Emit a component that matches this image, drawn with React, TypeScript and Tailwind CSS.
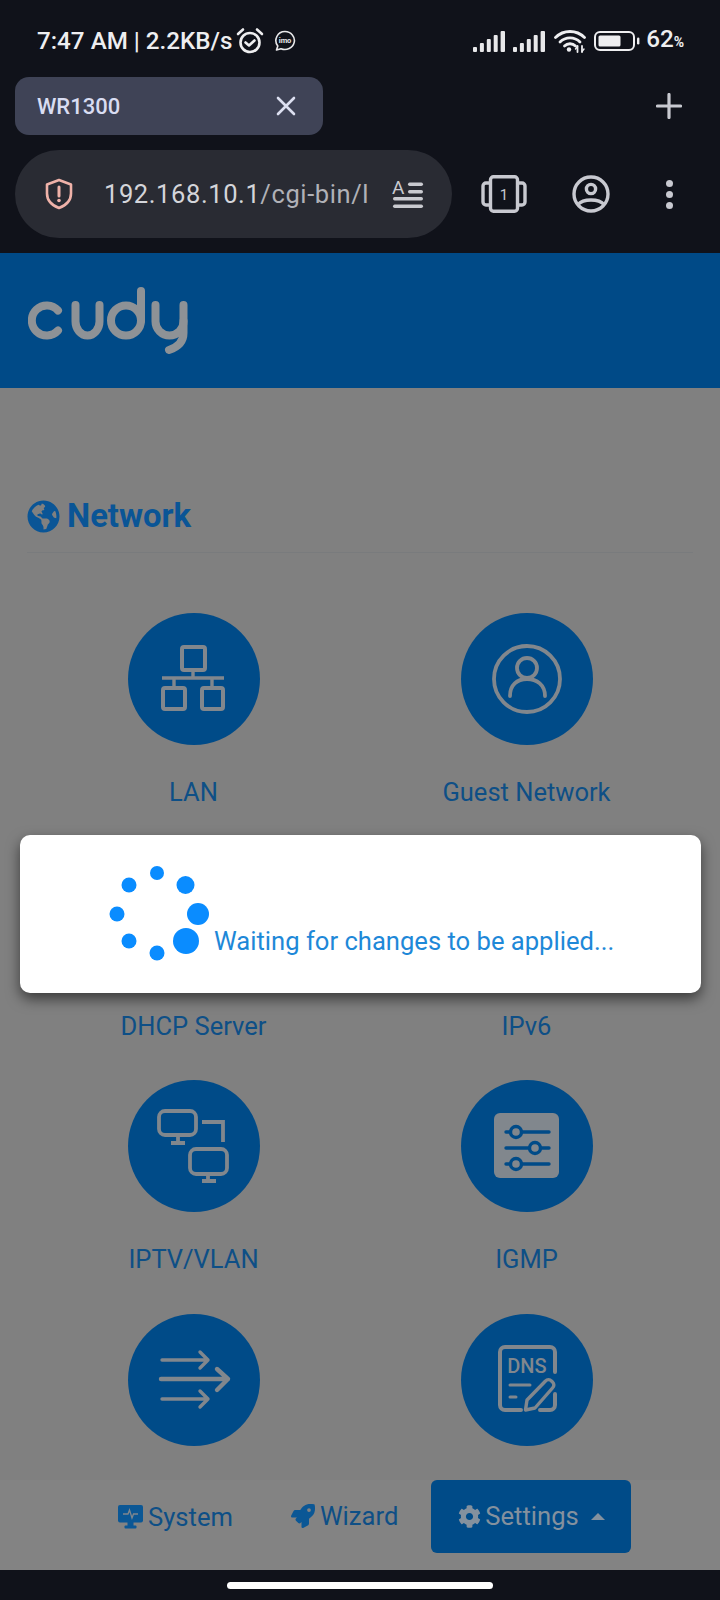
import React from "react";
import { FaGlobeAmericas, FaRocket, FaCog } from "react-icons/fa";

const G = "#81878d";

function Signal() {
  const bars = [5, 9, 13, 17, 21];
  return (
    <svg width="33" height="22" viewBox="0 0 33 22" fill="#e8e8ea">
      {bars.map((h, i) => (
        <rect key={i} x={i * 6.9} y={22 - h} width={i === 4 ? 4.4 : 4} height={h} rx="1" />
      ))}
    </svg>
  );
}

function Alarm() {
  return (
    <svg width="28" height="28" viewBox="0 0 28 28" fill="none" stroke="#eeeef0" strokeWidth="2.6" strokeLinecap="round" strokeLinejoin="round">
      <circle cx="14" cy="15.5" r="9.5" />
      <path d="M9.5 15.5l3.5 3 5.5-5" />
      <path d="M2 7 L7 2.5" />
      <path d="M26 7 L21 2.5" />
    </svg>
  );
}

function Imo() {
  return (
    <svg width="22" height="22" viewBox="0 0 22 22" fill="none" stroke="#e8e8ea">
      <path d="M11 1.5a9.5 9 0 1 1-4 17.2L2.5 20l1.3-4A9 9 0 0 1 11 1.5z" strokeWidth="1.6" strokeLinejoin="round" />
      <text x="11" y="13" fontSize="7.5" textAnchor="middle" fill="#e8e8ea" stroke="none" fontFamily="Roboto, sans-serif" fontWeight="700">imo</text>
    </svg>
  );
}

function Wifi() {
  return (
    <svg width="32" height="24" viewBox="0 0 32 24" fill="none" stroke="#eeeef0" strokeWidth="2.8" strokeLinecap="round">
      <path d="M1.5 8.5C9.5 .5 22.5 .5 30.5 8.5" />
      <path d="M6 13C11.5 7.5 20.5 7.5 26 13" />
      <path d="M10.5 17C13.5 14 18.5 14 21.5 17" />
      <circle cx="15" cy="20.5" r="2.2" fill="#eeeef0" stroke="none" />
      <path d="M23.5 17v6M28 17v6" strokeWidth="1.8" />
      <path d="M21.5 20l2-2.5M30 20l-2 2.5" strokeWidth="1.4" />
    </svg>
  );
}

function Battery() {
  return (
    <svg width="46" height="20" viewBox="0 0 46 20">
      <rect x="1" y="1" width="39" height="18" rx="5" fill="none" stroke="#eeeef0" strokeWidth="2" />
      <rect x="4.5" y="4.5" width="22" height="11" rx="1.5" fill="#eeeef0" />
      <rect x="43" y="6.5" width="2.4" height="7" rx="1.2" fill="#eeeef0" />
    </svg>
  );
}

function Shield() {
  return (
    <svg width="28" height="32" viewBox="0 0 28 32" fill="none" stroke="#efb2a9" strokeWidth="2.6" strokeLinejoin="round">
      <path d="M14 2 L26 6.5 V15.5 C26 23 20.5 27.5 14 30 C7.5 27.5 2 23 2 15.5 V6.5 Z" />
      <path d="M14 9v9" strokeLinecap="round" strokeWidth="3" />
      <circle cx="14" cy="22.5" r="1.8" fill="#efb2a9" stroke="none" />
    </svg>
  );
}

function Reader() {
  return (
    <svg width="32" height="30" viewBox="0 0 32 30" fill="#c9cad0" className="overflow-visible">
      <text x="0" y="14.5" fontSize="19" fontFamily="Roboto, sans-serif" fontWeight="400">A</text>
      <rect x="16" y="3.5" width="15" height="3.4" rx="1.7" />
      <rect x="16" y="11" width="15" height="3.4" rx="1.7" />
      <rect x="1" y="18" width="30" height="3.4" rx="1.7" />
      <rect x="1" y="25.5" width="30" height="3.4" rx="1.7" />
    </svg>
  );
}

function TabsIcon() {
  return (
    <svg width="46" height="38" viewBox="0 0 46 38" fill="none" stroke="#c8c9d0" strokeWidth="3.4" strokeLinejoin="round">
      <rect x="9.5" y="1.7" width="27" height="34.6" rx="3" />
      <path d="M9.5 8H5a3 3 0 0 0-3 3v16a3 3 0 0 0 3 3h4.5" />
      <path d="M36.5 8H41a3 3 0 0 1 3 3v16a3 3 0 0 1-3 3h-4.5" />
      <text x="23" y="25" fontSize="15" textAnchor="middle" fill="#c8c9d0" stroke="none" fontFamily="Roboto, sans-serif">1</text>
    </svg>
  );
}

function Profile() {
  return (
    <svg width="38" height="38" viewBox="0 0 38 38" fill="none" stroke="#c8c9d0" strokeWidth="3.4">
      <circle cx="19" cy="19" r="17" />
      <circle cx="19" cy="14" r="4.6" />
      <path d="M6 29.500C11 23.500 27 23.500 32 29.500" />
    </svg>
  );
}

function Logo() {
  return (
    <svg width="162" height="70" viewBox="0 0 162 70" fill="none" stroke="#8e9296" strokeWidth="8" strokeLinecap="round">
      <path d="M30 23.5A15 15 0 1 0 30 43.5" />
      <path d="M47.5 18V34.5A12 14 0 0 0 71.5 34.5V18" />
      <circle cx="98" cy="33.5" r="15" />
      <path d="M113 33.5V4" />
      <path d="M127.5 18V34.5A14 14 0 0 0 155.5 34.5V18" />
      <path d="M155.5 34V46C155.5 55 150 60 141 63" />
    </svg>
  );
}

function LanIcon() {
  return (
    <svg width="132" height="132" viewBox="0 0 132 132" fill="none" stroke={G} strokeWidth="4">
      <rect x="54" y="34" width="23" height="23" rx="2" />
      <path d="M65 57v8M34 65h62M46 65v9M84 65v9" strokeWidth="3.4" />
      <rect x="35" y="75" width="22" height="21" rx="2" />
      <rect x="74" y="75" width="21" height="21" rx="2" />
    </svg>
  );
}

function GuestIcon() {
  return (
    <svg width="132" height="132" viewBox="0 0 132 132" fill="none" stroke={G} strokeWidth="3.8" strokeLinecap="round">
      <circle cx="66" cy="66" r="33" />
      <circle cx="66" cy="55" r="10" />
      <path d="M49 83C49 72 56 66 66 66C76 66 84 72 84 83" />
    </svg>
  );
}

function VlanIcon() {
  return (
    <svg width="132" height="132" viewBox="0 0 132 132" fill="none" stroke={G} strokeWidth="3.8">
      <rect x="31" y="31" width="37" height="24" rx="6" />
      <path d="M50 55v8M43 63h14" />
      <path d="M74 42h21v20" />
      <rect x="62" y="69" width="37" height="25" rx="6" />
      <path d="M80 94v7M74 101h14" />
    </svg>
  );
}

function IgmpIcon() {
  const blue = "#004b88";
  return (
    <svg width="132" height="132" viewBox="0 0 132 132">
      <rect x="33" y="33" width="65" height="65" rx="6" fill={G} />
      <g stroke={blue} strokeWidth="3.4" strokeLinecap="round" fill={G}>
        <path d="M45 52h43M45 68h43M45 84h43" />
        <circle cx="55" cy="52" r="5.5" />
        <circle cx="74" cy="68" r="5.5" />
        <circle cx="55" cy="84" r="5.5" />
      </g>
    </svg>
  );
}

function ArrowsIcon() {
  return (
    <svg width="132" height="132" viewBox="0 0 132 132" fill="none" stroke={G} strokeLinecap="round" strokeLinejoin="round">
      <path d="M34 46h46M72 38l8 8-8 8" strokeWidth="3.4" />
      <path d="M33 65h67M89 55l11 10-11 11" strokeWidth="4.4" />
      <path d="M34 85h46M72 77l8 8-8 8" strokeWidth="3.4" />
    </svg>
  );
}

function DnsIcon() {
  return (
    <svg width="132" height="132" viewBox="0 0 132 132" fill="none" stroke={G} strokeWidth="4" strokeLinecap="round" strokeLinejoin="round">
      <path d="M94 58V38a5 5 0 0 0-5-5H44a5 5 0 0 0-5 5V91a5 5 0 0 0 5 5H60" />
      <path d="M94 80V91a5 5 0 0 1-5 5H79" />
      <text x="66" y="59" fontSize="20" textAnchor="middle" fill={G} stroke="none" fontFamily="Roboto, sans-serif" fontWeight="500">DNS</text>
      <path d="M49 71h20M49 83h6" strokeWidth="3" />
      <path d="M64.500 96L66 86 84.500 67a4 4 0 0 1 6 0l1 1a4 4 0 0 1 0 6L74 94Z" strokeWidth="3.4" />
    </svg>
  );
}

function SystemIcon() {
  return (
    <svg width="25" height="24" viewBox="0 0 25 24">
      <rect x="0" y="0" width="25" height="17.500" rx="2" fill="#0b5795" />
      <rect x="9.500" y="17" width="6" height="4.500" fill="#0b5795" />
      <rect x="6.500" y="20.500" width="12" height="3" rx="1" fill="#0b5795" />
      <path d="M5 9h5l1.500-4 2.500 8 1.500-4H20" fill="none" stroke={G} strokeWidth="1.300" />
    </svg>
  );
}

function Spinner() {
  const dots: [number, number, number][] = [
    [50, 13, 7],
    [78.500, 25, 9],
    [91, 54, 11],
    [79, 81, 13],
    [50, 93, 7.500],
    [22, 81, 7.500],
    [10, 54, 7.500],
    [22, 25, 7.500],
  ];
  return (
    <svg width="106" height="104" viewBox="0 0 106 104" fill="#0a8cff">
      {dots.map(([x, y, r], i) => (
        <circle key={i} cx={x} cy={y} r={r} />
      ))}
    </svg>
  );
}

function Item({ icon, label }: { icon?: React.ReactNode; label?: string }) {
  return (
    <div className="flex h-[233.5px] flex-col items-center">
      <div className="h-[132px] w-[132px] shrink-0 rounded-full bg-[#004b88]">{icon}</div>
      {label && <div className="mt-[33px] text-[25.5px] leading-[28px] text-[#0e4f86]">{label}</div>}
    </div>
  );
}

export default function App() {
  return (
    <div className="relative flex h-[1600px] w-[720px] flex-col overflow-hidden bg-[#10121a] font-['Roboto',sans-serif]">
      {/* status bar */}
      <div className="flex h-[77px] shrink-0 items-center justify-between pb-[7px] pl-[37px] pr-[36px] pt-[11px]">
        <div className="flex items-center">
          <span className="text-[24.2px] font-medium leading-[30px] text-[#eeeef0]">7:47 AM | 2.2KB/s</span>
          <span className="ml-[3px] flex"><Alarm /></span>
          <span className="ml-[10px] flex"><Imo /></span>
        </div>
        <div className="flex items-center">
          <Signal />
          <span className="ml-[7px] flex"><Signal /></span>
          <span className="ml-[8px] flex"><Wifi /></span>
          <span className="ml-[8px] flex"><Battery /></span>
          <span className="ml-[6px] text-[24.2px] font-medium leading-[30px] text-[#eeeef0]">62<span className="text-[14px] font-bold">%</span></span>
        </div>
      </div>

      {/* tab strip */}
      <div className="flex h-[58px] shrink-0 items-center justify-between pl-[15px] pr-[38px]">
        <div className="flex h-[58px] w-[308px] items-center justify-between rounded-[14px] bg-[#3f4356] pl-[22px] pr-[27px]">
          <span className="text-[22px] font-medium text-[#d9ddf2]">WR1300</span>
          <svg width="20" height="20" viewBox="0 0 20 20" stroke="#dcdff0" strokeWidth="2.600" strokeLinecap="round">
            <path d="M2 2l16 16M18 2L2 18" />
          </svg>
        </div>
        <svg width="26" height="26" viewBox="0 0 26 26" stroke="#c8c9d0" strokeWidth="3.200" strokeLinecap="round">
          <path d="M13 1.500v23M1.500 13h23" />
        </svg>
      </div>

      {/* url bar */}
      <div className="mt-[15px] flex h-[88px] shrink-0 items-center pl-[15px]">
        <div className="flex h-[88px] w-[437px] items-center overflow-hidden rounded-[44px] bg-[#292b33] pl-[30px]">
          <span className="flex shrink-0"><Shield /></span>
          <div className="ml-[31px] w-[268px] shrink-0 overflow-hidden whitespace-nowrap text-[25.5px] tracking-[0.6px] text-[#d4d5da]">
            192.168.10.1<span className="text-[#b0b1b7]">/cgi-bin/l</span>
          </div>
          <span className="ml-[20px] flex shrink-0"><Reader /></span>
        </div>
        <span className="ml-[29px] flex"><TabsIcon /></span>
        <span className="ml-[45px] flex"><Profile /></span>
        <div className="ml-[56px] flex flex-col gap-[4px]">
          <span className="h-[7px] w-[7px] rounded-full bg-[#c8c9d0]" />
          <span className="h-[7px] w-[7px] rounded-full bg-[#c8c9d0]" />
          <span className="h-[7px] w-[7px] rounded-full bg-[#c8c9d0]" />
        </div>
      </div>

      {/* cudy header */}
      <div className="mt-[15px] flex h-[135px] shrink-0 items-start bg-[#004a87] pl-[28px] pt-[34px]">
        <Logo />
      </div>

      {/* page */}
      <div className="relative h-[1182px] shrink-0 overflow-hidden bg-[#808080] px-[27px]">
        <div className="flex h-[165px] flex-col justify-end border-b border-[#797b7d] pb-[18px]">
          <div className="flex items-center gap-[7px] text-[32.8px] font-bold leading-[36px] text-[#0a5596]">
            <FaGlobeAmericas size={33} />
            <span>Network</span>
          </div>
        </div>
        <div className="mt-[60px] grid grid-cols-2">
          <Item icon={<LanIcon />} label="LAN" />
          <Item icon={<GuestIcon />} label="Guest Network" />
          <Item label="DHCP Server" />
          <Item label="IPv6" />
          <Item icon={<VlanIcon />} label="IPTV/VLAN" />
          <Item icon={<IgmpIcon />} label="IGMP" />
          <Item icon={<ArrowsIcon />} />
          <Item icon={<DnsIcon />} />
        </div>

        {/* bottom nav, stuck over the list */}
        <div className="absolute bottom-0 left-0 right-0 flex h-[90px] items-start bg-[#838383] pl-[118px]">
          <div className="mt-[22px] flex items-center gap-[5px] text-[25.6px] leading-[30px] text-[#0e4f86]">
            <SystemIcon />
            <span>System</span>
          </div>
          <div className="ml-[58px] mt-[21px] flex items-center gap-[5px] text-[25.6px] leading-[30px] text-[#0e4f86]">
            <FaRocket size={24} color="#0b5795" />
            <span>Wizard</span>
          </div>
          <div className="ml-[33px] flex h-[73px] w-[200px] items-center rounded-[6px] bg-[#004b88] pl-[27px] text-[25.6px] text-[#84919e]">
            <FaCog size={23} />
            <span className="ml-[4px]">Settings</span>
            <span className="ml-[12px] h-0 w-0 border-x-[7px] border-b-[7px] border-x-transparent border-b-[#84919e]" />
          </div>
        </div>
      </div>

      {/* gesture bar */}
      <div className="flex flex-1 justify-center pt-[12px]">
        <div className="h-[7px] w-[266px] rounded-full bg-white" />
      </div>

      {/* dialog */}
      <div className="absolute left-[20px] top-[835px] flex h-[158px] w-[681px] items-start rounded-[10px] bg-white pl-[87px] pt-[25px] shadow-[0_6px_14px_rgba(0,0,0,0.55)]">
        <Spinner />
        <span className="ml-[1px] mt-[66px] whitespace-nowrap text-[25.6px] leading-[30px] text-[#1e88d8]">Waiting for changes to be applied...</span>
      </div>
    </div>
  );
}
